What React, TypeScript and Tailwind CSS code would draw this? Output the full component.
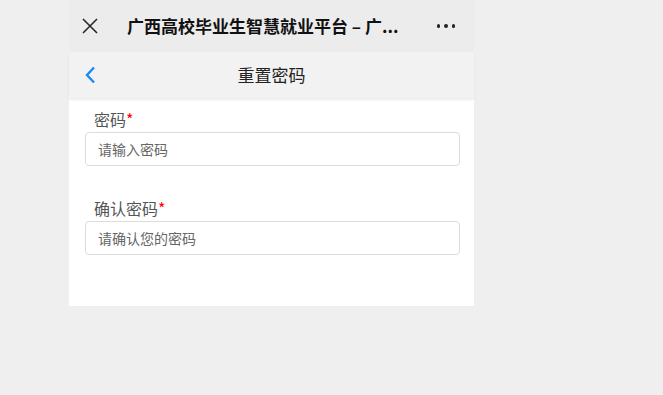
import React from "react";

const fontStack = { fontFamily: '"Noto Sans CJK SC", "Noto Sans", sans-serif' };

function Field({ label, placeholder }: { label: string; placeholder: string }) {
  return (
    <div className="px-[16px]">
      <div className="pl-[9px] text-[16px] leading-[22px] text-[#555]">
        {label}
        <span className="text-[#f00]">*</span>
      </div>
      <input
        type="password"
        placeholder={placeholder}
        className="mt-[2px] block h-[34px] w-[375px] rounded-[4px] border border-[#dcdcdc] bg-white px-[12px] text-[14px] placeholder:text-[#666] outline-none"
        style={fontStack}
      />
    </div>
  );
}

export default function App() {
  return (
    <div className="flex h-[395px] w-full bg-[#efefef]" style={fontStack}>
      <div className="ml-[69px] flex w-[405px] flex-col">
        {/* WeChat title bar */}
        <div className="flex h-[52px] items-center bg-[#ececec] px-[12px]">
          <svg width="16" height="16" viewBox="0 0 16 16" className="ml-[1px]">
            <path d="M1 1 L15 15 M15 1 L1 15" stroke="#222" strokeWidth="1.5" />
          </svg>
          <div className="ml-[29px] whitespace-nowrap text-[17px] font-semibold text-[#111]">
            广西高校毕业生智慧就业平台 – 广...
          </div>
          <div className="ml-auto mr-[7px] flex gap-[4px]">
            <span className="h-[3.5px] w-[3.5px] rounded-full bg-[#222]" />
            <span className="h-[3.5px] w-[3.5px] rounded-full bg-[#222]" />
            <span className="h-[3.5px] w-[3.5px] rounded-full bg-[#222]" />
          </div>
        </div>

        {/* page header */}
        <div className="relative z-10 flex h-[46px] items-center justify-center bg-[#f2f2f2] shadow-[0_2px_2px_rgba(0,0,0,0.08)]">
          <svg width="12" height="18" viewBox="0 0 12 18" className="absolute left-[15px] top-[14px]">
            <path d="M10 1.5 L3 9 L10 16.5" fill="none" stroke="#1a8cf0" strokeWidth="2.4" />
          </svg>
          <span className="text-[17px] text-[#222]">重置密码</span>
        </div>

        {/* form */}
        <div className="flex h-[208px] flex-col gap-[31px] bg-white pt-[10px]">
          <Field label="密码" placeholder="请输入密码" />
          <Field label="确认密码" placeholder="请确认您的密码" />
        </div>
      </div>
    </div>
  );
}
